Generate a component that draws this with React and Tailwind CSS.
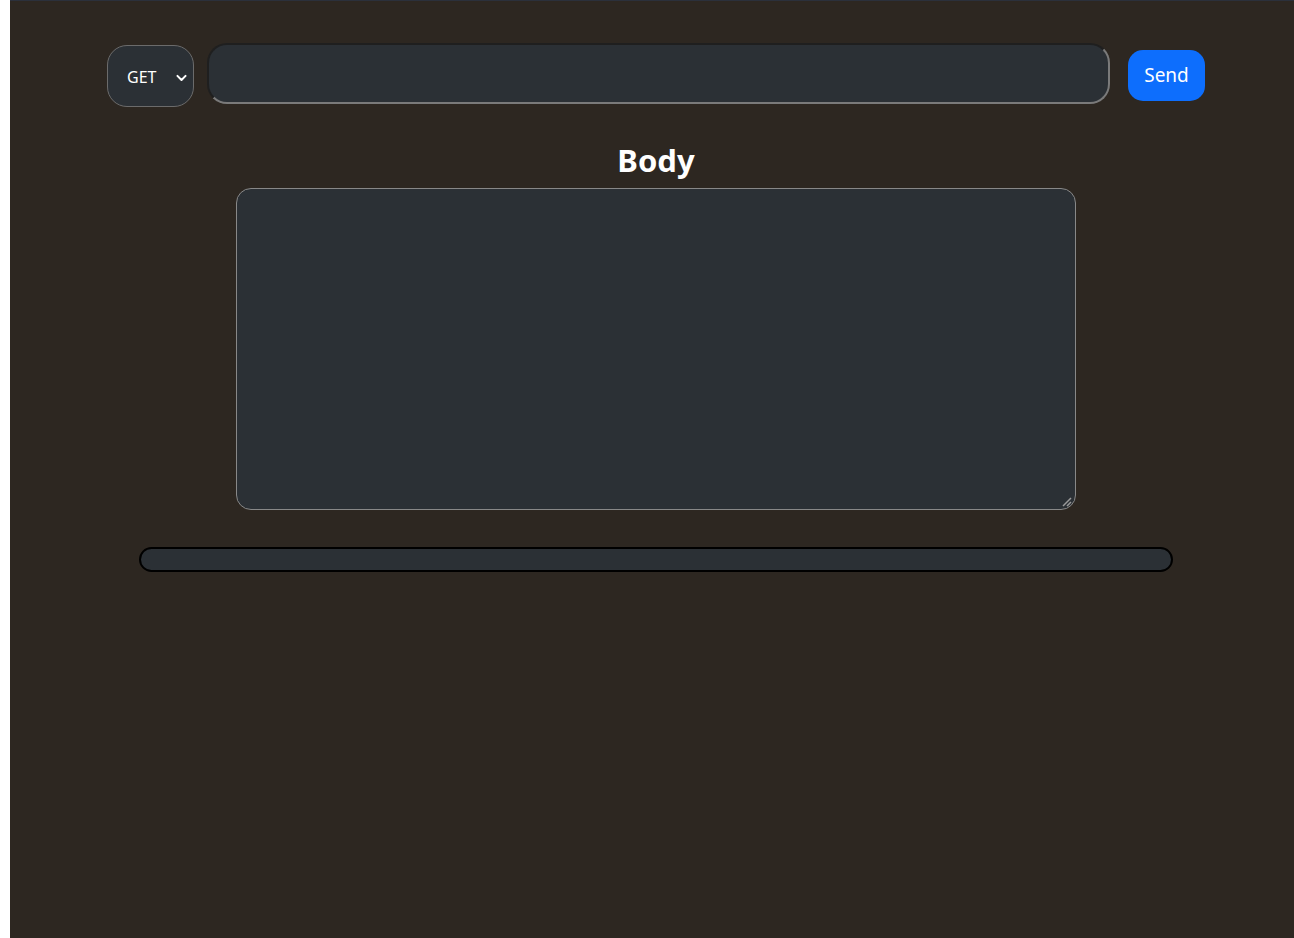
export default function App() {
  return (
    <div className="flex h-[938px] w-[1294px] bg-white" style={{ fontFamily: '"Noto Sans", "Open Sans", sans-serif' }}>
      <div className="ml-[10px] flex h-full flex-1 flex-col border-t border-t-[#2b303b] bg-[#2d2721]">
        <div className="mt-[44px] flex items-center pl-[97px]">
          <div className="flex h-[62px] w-[87px] items-center justify-between rounded-[20px] border border-[#6b6b6b] bg-[#2b3035] pl-[19px] pr-[5px] pt-[2px] text-[16px] text-white">
            <span>GET</span>
            <svg width="13" height="13" viewBox="0 0 16 16" fill="none" stroke="#ffffff" strokeWidth="2.5" strokeLinecap="round" strokeLinejoin="round">
              <path d="M3 6l5 5 5-5" />
            </svg>
          </div>
          <div className="ml-[13px] h-[61px] w-[903px] -translate-y-[3px] rounded-[20px] border-2 border-t-[#1f1f1f] border-l-[#1f1f1f] border-r-[#7a7a7a] border-b-[#7a7a7a] bg-[#2b3035]" />
          <button className="ml-[18px] h-[51px] w-[77px] -translate-y-[1px] rounded-[15px] bg-[#0d6efd] text-[19px] text-white">
            Send
          </button>
        </div>
        <div className="mt-[31px] w-full pl-[8px] text-center text-[31px] font-bold leading-[44px] text-white">Body</div>
        <div className="relative mt-[6px] ml-[226px] h-[322px] w-[840px] rounded-[15px] border border-[#888888] bg-[#2b3035]">
          <svg className="absolute bottom-[2px] right-[3px]" width="10" height="10" viewBox="0 0 10 10" stroke="#9a9a9a" strokeWidth="1.5">
            <path d="M9 1L1 9M9 5L5 9" />
          </svg>
        </div>
        <div className="mt-[37px] ml-[129px] h-[25px] w-[1034px] rounded-full border-2 border-black bg-[#2b3035]" />
      </div>
    </div>
  );
}
